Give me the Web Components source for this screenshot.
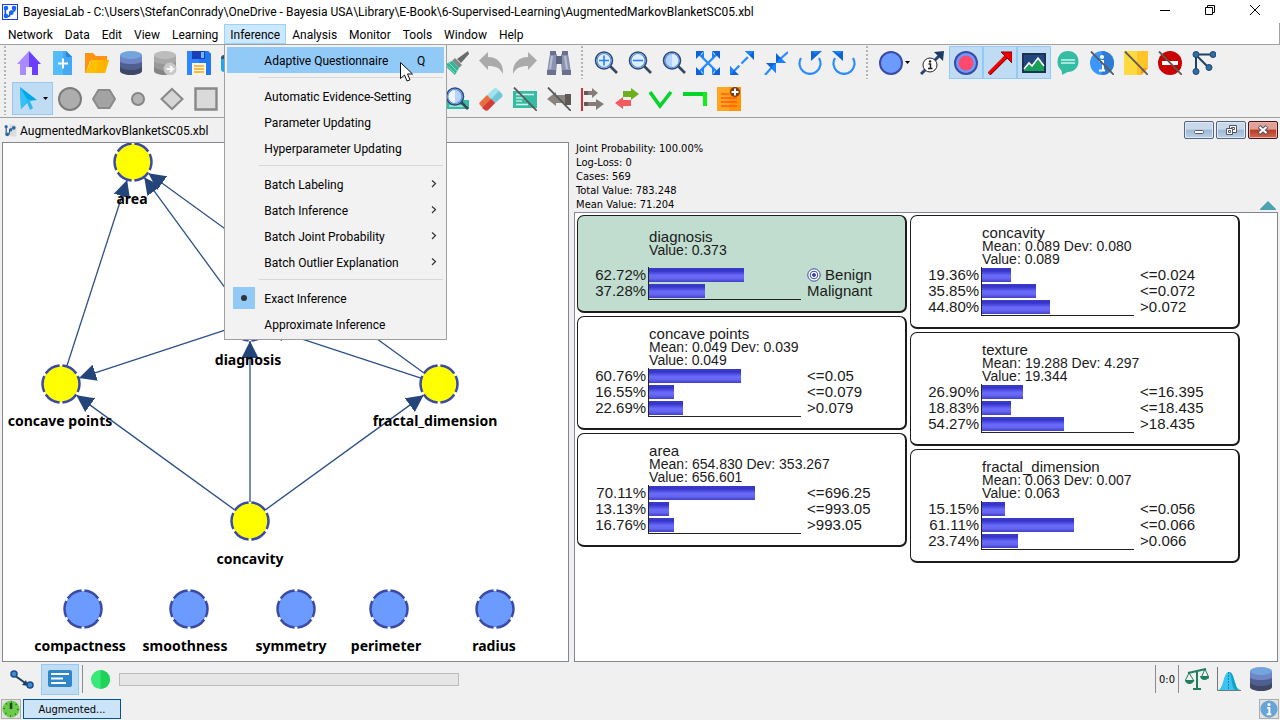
<!DOCTYPE html>
<html lang="en">
<head>
<meta charset="utf-8">
<meta name="viewport" content="width=device-width, initial-scale=1">
<title>BayesiaLab</title>
<style>
  :root {
    --ui-font: Roboto, "Open Sans", sans-serif;
    --small-font: "DejaVu Sans Condensed", "DejaVu Sans", sans-serif;
    --face: #f0f0f0;
    --line: #a0a0a0;
    --pane-line: #828790;
    --hot: #91c9f7;
    --pressed: #c0dcf3;
  }

  body {
    margin: 0;
    min-height: 100vh;
    display: flex;
    flex-direction: column;
    background: var(--face);
    color: #000;
    font-family: var(--ui-font);
    font-size: 12px;
  }

  .toolbars {
    display: flex;
    flex-direction: column;
    gap: 3px;
    padding: 1px 0 2px;
    border-bottom: 1px solid var(--line);
  }

  .toolbar-row {
    display: flex;
    gap: 1px;
  }

  main {
    flex: 1;
    display: flex;
    gap: 5px;
    padding: 0 2px;
  }

  bayes-graph {
    flex: 566 1 0;
  }

  .monitors {
    flex: 705 1 0;
    display: flex;
    flex-direction: column;
    min-width: 0;
  }

  .monitor-columns {
    flex: 1;
    display: flex;
    align-items: flex-start;
    gap: 3px;
    padding: 2px;
    background: #fff;
    border: 1px solid var(--pane-line);
  }

  .monitor-columns > div {
    display: flex;
    flex-direction: column;
    gap: 3px;
    width: 330px;
  }
</style>
</head>
<body>
  <title-bar>BayesiaLab - C:\Users\StefanConrady\OneDrive - Bayesia USA\Library\E-Book\6-Supervised-Learning\AugmentedMarkovBlanketSC05.xbl</title-bar>

  <menu-bar>
    <menu-title>Network</menu-title>
    <menu-title>Data</menu-title>
    <menu-title>Edit</menu-title>
    <menu-title>View</menu-title>
    <menu-title>Learning</menu-title>
    <menu-title open>Inference
      <menu-popup slot="popup">
        <menu-entry active shortcut="Q">Adaptive Questionnaire</menu-entry>
        <menu-separator></menu-separator>
        <menu-entry>Automatic Evidence-Setting</menu-entry>
        <menu-entry>Parameter Updating</menu-entry>
        <menu-entry>Hyperparameter Updating</menu-entry>
        <menu-separator></menu-separator>
        <menu-entry submenu>Batch Labeling</menu-entry>
        <menu-entry submenu>Batch Inference</menu-entry>
        <menu-entry submenu>Batch Joint Probability</menu-entry>
        <menu-entry submenu>Batch Outlier Explanation</menu-entry>
        <menu-separator></menu-separator>
        <menu-entry checked>Exact Inference</menu-entry>
        <menu-entry>Approximate Inference</menu-entry>
      </menu-popup>
    </menu-title>
    <menu-title>Analysis</menu-title>
    <menu-title>Monitor</menu-title>
    <menu-title>Tools</menu-title>
    <menu-title>Window</menu-title>
    <menu-title>Help</menu-title>
  </menu-bar>

  <div class="toolbars">
    <div class="toolbar-row">
      <tool-bar>
        <tool-button icon="home" label="Home"></tool-button>
        <tool-button icon="newDoc" label="New graph"></tool-button>
        <tool-button icon="folder" label="Open"></tool-button>
        <tool-button icon="database" label="Data source"></tool-button>
        <tool-button icon="databaseOff" label="Associate data"></tool-button>
        <tool-button icon="save" label="Save"></tool-button>
        <tool-button icon="print" label="Print"></tool-button>
        <tool-gap style="--w: 190px"></tool-gap>
        <tool-button icon="brush" label="Format painter"></tool-button>
        <tool-button icon="undo" label="Undo"></tool-button>
        <tool-button icon="redo" label="Redo"></tool-button>
        <tool-button icon="binoculars" label="Search"></tool-button>
      </tool-bar>
      <tool-bar>
        <tool-button icon="zoomIn" label="Zoom in"></tool-button>
        <tool-button icon="zoomOut" label="Zoom out"></tool-button>
        <tool-button icon="zoom" label="Default zoom"></tool-button>
        <tool-button icon="fit" label="Best fit"></tool-button>
        <tool-button icon="expand" label="Spread out"></tool-button>
        <tool-button icon="contract" label="Pull together"></tool-button>
        <tool-button icon="rotateLeft" label="Rotate left"></tool-button>
        <tool-button icon="rotateRight" label="Rotate right"></tool-button>
      </tool-bar>
      <tool-bar>
        <tool-button icon="blueNode" label="Node style" dropdown></tool-button>
        <tool-button icon="arcInfo" label="Arc information"></tool-button>
        <tool-button icon="target" label="Show target" pressed></tool-button>
        <tool-button icon="redArrow" label="Show arc force" pressed></tool-button>
        <tool-button icon="picture" label="Show images" pressed></tool-button>
        <tool-button icon="chat" label="Comments"></tool-button>
        <tool-button icon="infoOff" label="Hide information"></tool-button>
        <tool-button icon="noteOff" label="Hide notes"></tool-button>
        <tool-button icon="forbidOff" label="Hide forbidden arcs"></tool-button>
        <tool-button icon="network" label="Layout"></tool-button>
      </tool-bar>
    </div>
    <div class="toolbar-row">
      <tool-bar>
        <tool-button icon="pointer" label="Select" dropdown pressed></tool-button>
        <tool-button icon="circle" label="Node"></tool-button>
        <tool-button icon="hexagon" label="Constraint node"></tool-button>
        <tool-button icon="smallCircle" label="Function node"></tool-button>
        <tool-button icon="diamond" label="Utility node"></tool-button>
        <tool-button icon="square" label="Decision node"></tool-button>
        <tool-gap style="--w: 217px"></tool-gap>
        <tool-button icon="findCard" label="Find monitor"></tool-button>
        <tool-button icon="eraser" label="Clear evidence"></tool-button>
        <tool-button icon="cardOff" label="Hide monitors"></tool-button>
        <tool-button icon="backOff" label="Cancel"></tool-button>
        <tool-button icon="align" label="Align"></tool-button>
        <tool-button icon="swap" label="Swap"></tool-button>
        <tool-button icon="vee" label="V structure"></tool-button>
        <tool-button icon="corner" label="Corner"></tool-button>
        <tool-button icon="addNote" label="Add note"></tool-button>
      </tool-bar>
    </div>
  </div>

  <frame-title>AugmentedMarkovBlanketSC05.xbl</frame-title>

  <main>
    <bayes-graph></bayes-graph>
    <section class="monitors">
      <evidence-summary>
        <div>Joint Probability: 100.00%</div>
        <div>Log-Loss: 0</div>
        <div>Cases: 569</div>
        <div>Total Value: 783.248</div>
        <div>Mean Value: 71.204</div>
      </evidence-summary>
      <div class="monitor-columns">
        <div>
          <node-monitor name="diagnosis" value="0.373" target>
            <monitor-state p="62.72" target>Benign</monitor-state>
            <monitor-state p="37.28">Malignant</monitor-state>
          </node-monitor>
          <node-monitor name="concave points" mean="0.049" dev="0.039" value="0.049">
            <monitor-state p="60.76">&lt;=0.05</monitor-state>
            <monitor-state p="16.55">&lt;=0.079</monitor-state>
            <monitor-state p="22.69">&gt;0.079</monitor-state>
          </node-monitor>
          <node-monitor name="area" mean="654.830" dev="353.267" value="656.601">
            <monitor-state p="70.11">&lt;=696.25</monitor-state>
            <monitor-state p="13.13">&lt;=993.05</monitor-state>
            <monitor-state p="16.76">&gt;993.05</monitor-state>
          </node-monitor>
        </div>
        <div>
          <node-monitor name="concavity" mean="0.089" dev="0.080" value="0.089">
            <monitor-state p="19.36">&lt;=0.024</monitor-state>
            <monitor-state p="35.85">&lt;=0.072</monitor-state>
            <monitor-state p="44.80">&gt;0.072</monitor-state>
          </node-monitor>
          <node-monitor name="texture" mean="19.288" dev="4.297" value="19.344">
            <monitor-state p="26.90">&lt;=16.395</monitor-state>
            <monitor-state p="18.83">&lt;=18.435</monitor-state>
            <monitor-state p="54.27">&gt;18.435</monitor-state>
          </node-monitor>
          <node-monitor name="fractal_dimension" mean="0.063" dev="0.007" value="0.063">
            <monitor-state p="15.15">&lt;=0.056</monitor-state>
            <monitor-state p="61.11">&lt;=0.066</monitor-state>
            <monitor-state p="23.74">&gt;0.066</monitor-state>
          </node-monitor>
        </div>
      </div>
    </section>
  </main>

  <status-bar></status-bar>
  <task-bar>Augmented...</task-bar>

<script>
// 24x24 artwork, keyed by name
const slash = '<path d="M1 0.500L24 24" stroke="#5a5a5a" stroke-width="1.800"/>';
const lens = (fill, inner) => `
  <path d="M16 15l7 7" stroke="#34495e" stroke-width="2.600"/>
  <circle cx="10" cy="9.500" r="8.500" fill="${fill}" stroke="#2f4a73" stroke-width="1.600"/>
  <circle cx="10" cy="9.500" r="7" fill="none" stroke="#5a8fe0" stroke-width="1.200"/>${inner}`;
const dbArt = (top, a, b, c) => `
  <path d="M1 4v16c0 2 4.500 4 11 4s11-2 11-4V4z" fill="${c}"/>
  <path d="M1 4v11c0 2 4.500 4 11 4s11-2 11-4V4z" fill="${b}"/>
  <path d="M1 4v6c0 2 4.500 3 11 3s11-1 11-3V4z" fill="${a}"/>
  <ellipse cx="12" cy="4" rx="11" ry="4" fill="${top}"/>`;
const disc = '<circle cx="12" cy="12" r="11" fill="#6b9bff" stroke="#3b4ba5" stroke-width="2"/>';
const card = '<path d="M0 4h24v17H0z" fill="#35bda4"/><path d="M3 7.500h18M3 17.500h12" stroke="#d9f5ee" stroke-width="1.500"/><path d="M3 11h8M3 14h6" stroke="#fff" stroke-width="1.200"/>';

const ICONS = {
  app: '<rect x=".5" y=".5" width="23" height="23" fill="#fff" stroke="#1a3df0" stroke-width="2"/><path d="M5 5v14l6-1 2-6 6-2V5" fill="none" stroke="#1f55a0" stroke-width="2.500"/><g fill="#1565ff"><circle cx="6" cy="6" r="3.500"/><circle cx="6" cy="18" r="3.500"/><circle cx="18" cy="6" r="3.500"/><circle cx="14" cy="13" r="3.500"/></g>',
  doc: '<path d="M10 1h10l3 4v18H10z" fill="#dcdcdc"/><path d="M4 5v14l5 0 2-8 6-3" fill="none" stroke="#1f4a80" stroke-width="2"/><g fill="#2d6ba8"><circle cx="4" cy="5" r="3"/><circle cx="6" cy="19" r="3.500"/><circle cx="12" cy="11" r="3"/><circle cx="18" cy="7" r="3.500"/></g>',
  home: '<path d="M12 0L0 13h3v11h6v-8h3z" fill="#a98bff"/><path d="M12 0l12 13h-3v11h-6v-8h-3z" fill="#6a3dff"/>',
  newDoc: '<path d="M2 0h13l6 6v18H2z" fill="#53bcff"/><path d="M12 0h3l6 6v18h-9z" fill="#45a8f5"/><path d="M15 0v6h6z" fill="#2a85d8"/><path d="M7 12.500h10M12 7.500v10" stroke="#fff" stroke-width="2"/>',
  folder: '<path d="M0 2h8l3 3h11v5H5L1 22H0z" fill="#ff9412"/><path d="M6 9h18l-4 13H1z" fill="#ffc000"/><path d="M14 9h10l-4 13h-9z" fill="#ffb400"/>',
  database: dbArt('#73a5dc', '#7086c4', '#4f5f8e', '#3e4763'),
  databaseOff: dbArt('#bdbdbd', '#a9a9a9', '#989898', '#858585') + '<circle cx="17" cy="18" r="6.500" fill="#c9c9c9"/><path d="M13.500 18h6m-2.500-3l3 3-3 3" fill="none" stroke="#f8f8f8" stroke-width="2"/>',
  save: '<path d="M0 0h21l3 3v21H0z" fill="#2f86ff"/><path d="M12 0h9l3 3v21H12z" fill="#2278f0"/><path d="M5 0h13v8H5z" fill="#1c3fb8"/><path d="M14 1h3v6h-3z" fill="#6fb4ff"/><path d="M5 12h14v12H5z" fill="#fff4dc"/><path d="M7 15h10M7 18h10M7 21h10" stroke="#f5a623" stroke-width="1.400"/>',
  print: '<rect x="0" y="4" width="24" height="17" rx="3" fill="#1fa8f0"/><path d="M0 8a4 4 0 0 1 4-4h16v4z" fill="#3e4f63"/>',
  brush: '<path d="M23 0l1 3-8 9-4-4z" fill="#6a6a6a"/><path d="M10 7l7 7-3 3-7-7z" fill="#7d8a8a"/><path d="M7 10l7 7-4 7L-1 14z" fill="#35b497"/><path d="M1 14l9 8M4 12l8 8" stroke="#7fe0c8"/>',
  undo: '<path d="M0 9.500L9 1v5c9 0 15 6 15 15v2c-3-6-7-8-15-8v4z" fill="#aaa"/>',
  redo: '<path d="M24 9.500L15 1v5C6 6 0 12 0 21v2c3-6 7-8 15-8v4z" fill="#aaa"/>',
  binoculars: '<path d="M3 3h7v10l-1 9H0L2 8zM14 3h7l1 5 2 14h-9l-1-9z" fill="#8b93b0"/><path d="M9 5h6v8H9z" fill="#5d6480"/><path d="M3 0h6v4H3zM15 0h6v4h-6z" fill="#6a718f"/><path d="M0 19h9v5H0zM15 19h9v5h-9z" fill="#6a718f"/><path d="M5 5l-2 13M18 5l2 13" stroke="#b9c0d6" stroke-width="2"/>',
  zoomIn: lens('#e0efff', '<path d="M5 9.500h10M10 4.500v10" stroke="#2a7fff" stroke-width="1.600"/>'),
  zoomOut: lens('#e0efff', '<path d="M5 9.500h10" stroke="#2a7fff" stroke-width="1.600"/>'),
  zoom: lens('#b5d3ff', '<path d="M10 3a6.500 6.500 0 0 1 0 13z" fill="#dcebff"/>'),
  fit: '<path d="M3 3l18 18M21 3L3 21" stroke="#2a8cff" stroke-width="2.400"/><path d="M0 0h8L0 8zM24 0v8l-8-8zM0 24v-8l8 8zM24 24h-8l8-8z" fill="#1063d6"/><path d="M8 0L5 5l3 3zM16 0l3 5-3 3zM8 24l-3-5 3-3zM16 24l3-5-3-3z" fill="#1683ff"/>',
  expand: '<path d="M3 21L21 3" stroke="#2a8cff" stroke-width="2.200" stroke-dasharray="9 3"/><path d="M24 0v9l-9-9zM0 24v-9l9 9z" fill="#1063d6"/><path d="M24 0h-9l5 4zM0 24v-9l4 5z" fill="#1683ff"/>',
  contract: '<path d="M24 1L15 9M9 15L1 24" stroke="#2a8cff" stroke-width="2.200"/><path d="M12 2v10h10zM2 12h10v10z" fill="#1063d6"/><path d="M12 12h10l-6-5zM12 12v10l-5-6z" fill="#1683ff"/>',
  rotateLeft: '<path d="M3 7a10.500 10.500 0 1 0 18 0" fill="none" stroke="#2a8cff" stroke-width="2.200"/><path d="M13 0h11L13 10z" fill="#1063d6"/><path d="M13 0h11l-7 3z" fill="#1683ff"/>',
  rotateRight: '<path d="M21 7a10.500 10.500 0 1 1-18 0" fill="none" stroke="#2a8cff" stroke-width="2.200"/><path d="M0 0h11v10z" fill="#1063d6"/><path d="M0 0h11L7 3z" fill="#1683ff"/>',
  blueNode: disc,
  arcInfo: '<path d="M1 23L21 3" stroke="#24457a" stroke-width="3"/><path d="M14 1L24 0l-1 10z" fill="#1d3a63"/><circle cx="10" cy="14" r="7" fill="#fff" stroke="#222"/><circle cx="10" cy="10.500" r="1.200" fill="#222"/><path d="M8.500 13h2v4.500M8 17.500h4.500" fill="none" stroke="#222" stroke-width="1.500"/>',
  target: disc + '<circle cx="12" cy="12" r="7.500" fill="#ff4a6e"/>',
  redArrow: '<path d="M1 23L18 6" stroke="#8e0000" stroke-width="4"/><path d="M1 22.500L18 5.500" stroke="#f00" stroke-width="2.500"/><path d="M13 1h11v11z" fill="#f00000" stroke="#800"/>',
  picture: '<path d="M0 2h24v20H0z" fill="#1b3350"/><path d="M2 4h20v16H2z" fill="#24487e"/><path d="M2 19l5-6 3 3 6-8 6 8v4H2z" fill="#16a05a"/><path d="M2 18l5-6 3 3 6-8 6 8" fill="none" stroke="#fff" stroke-width="1.600"/>',
  chat: '<path d="M12 0C18.500 0 22.500 4.500 22.500 10.500S18 21 12 21c-1 0-2 1-6 3 0-2 0-3-1-5-2-2-3.500-4-3.500-8C1.500 4.500 5.500 0 12 0z" fill="#35bda4"/><path d="M5 9h14M5 12h14" stroke="#c9f3ea" stroke-width="1.500"/>',
  infoOff: '<circle cx="12" cy="12" r="12" fill="#3a97ff"/><path d="M12 0a12 12 0 0 1 0 24z" fill="#2f7bd4"/><circle cx="12" cy="6" r="2" fill="#fff"/><path d="M9 10h4v9M9 19.500h6" fill="none" stroke="#fff" stroke-width="2"/>' + slash,
  noteOff: '<path d="M0 0h24v17l-7 7H0z" fill="#ffda3e"/><path d="M13 0h11v17l-7 7h-4z" fill="#ffc428"/><path d="M24 17h-7v7z" fill="#f39c12"/>' + slash,
  forbidOff: '<circle cx="12" cy="12" r="12" fill="#c80000"/><path d="M4 10h16v4H4z" fill="#fff"/>' + slash,
  network: '<path d="M21 3.500H4v17M4 4l13 13" fill="none" stroke="#1f4260" stroke-width="2"/><g fill="#2e6f9e" stroke="#1b4480"><circle cx="4" cy="3.500" r="3"/><circle cx="21" cy="3.500" r="3"/><circle cx="17" cy="16.500" r="3"/><circle cx="4" cy="20.500" r="3"/></g>',
  pointer: '<path d="M3 0l17 13-8 1-8 8z" fill="#00a8e8"/><path d="M3 0l8 14-7 8z" fill="#35c1f5"/><path d="M9 13l3-1 4 9-3 2z" fill="#2db8ef"/>',
  circle: '<circle cx="12" cy="12" r="11" fill="#adadad" stroke="#7c7c7c" stroke-width="2"/>',
  hexagon: '<path d="M6.500 3h11L23 12l-5.500 9h-11L1 12z" fill="#a3a3a3" stroke="#8a8a8a" stroke-width="2"/>',
  smallCircle: '<circle cx="12" cy="12" r="6" fill="#b4b4b4" stroke="#858585" stroke-width="2"/>',
  diamond: '<path d="M12 2l10.500 10L12 22 1.500 12z" fill="#d6d6d6" stroke="#888" stroke-width="2"/>',
  square: '<path d="M1.500 1.500h21v21h-21z" fill="#dadada" stroke="#888" stroke-width="2.400"/>',
  findCard: '<path d="M2 13h22v9H2z" fill="#35bda4"/><path d="M4 19h18" stroke="#fff"/>' + lens('#b5d3ff', '<path d="M10 3a6.500 6.500 0 0 0 0 13z" fill="#eef5ff"/>'),
  eraser: '<path d="M15 1.500q1.500-1 3 0l5 5.500q1 1.500 0 3l-7 6-8-8z" fill="#9fe3ec"/><path d="M20 4l3 3q1 1.500 0 3l-7 6-4-4z" fill="#72c6d8"/><path d="M8 8l8 8-7 7q-2 1-3 0l-5-5q-1.500-1.500 0-3z" fill="#e8703c"/><path d="M12 12l4 4-7 7q-2 1-3 0l-3-2z" fill="#d33a3a"/>',
  cardOff: card + slash,
  backOff: '<path d="M0 12l9-7v3h9v8H9v3z" fill="#8a8380"/><path d="M18 7h6v11h-6z" fill="#5f5a57"/>' + slash,
  align: '<path d="M1 1v23" stroke="#d12f35" stroke-width="2"/><path d="M3 4h8V1l6 5-6 5V8H3zM3 15h12v-3l8 5-8 6v-4H3z" fill="#857c78"/><path d="M3 4h4v4H3zM3 15h4v4H3z" fill="#625b58"/>',
  swap: '<path d="M8 4h8V1l8 6-8 6v-3H8z" fill="#6cb01f"/><path d="M16 13H8v-3l-8 6 8 6v-3h8z" fill="#f4595c"/>',
  vee: '<path d="M1 5l10 14L22 5" fill="none" stroke="#06d42c" stroke-width="3.600"/>',
  corner: '<path d="M0 7h22v12" fill="none" stroke="#06d42c" stroke-width="4"/><path d="M22 5v14" stroke="#10f018" stroke-width="4"/>',
  addNote: '<path d="M0 0h24v24H0z" fill="#ffa51e"/><path d="M12 0h12v24H12z" fill="#ff9500"/><path d="M4 7h8M4 11h16M4 15h16M4 19h16" stroke="#ff5a1e" stroke-width="1.600"/><circle cx="18" cy="5" r="5" fill="#7c3b12"/><path d="M14.500 5h7M18 1.500v7" stroke="#fff" stroke-width="2"/>',
  arc: '<path d="M4 8l14 10" stroke="#1f3f55" stroke-width="2"/><path d="M18 19l-6-1 4-5z" fill="#1f3f55"/><g fill="#3f8fc0" stroke="#1b4a9a" stroke-width="1.500"><circle cx="4" cy="7" r="3"/><circle cx="20" cy="18" r="3"/></g>',
  monitor: '<path d="M0 5q0-2 2-2h20q2 0 2 2v13q0 2-2 2H2q-2 0-2-2z" fill="#2f86c8"/><path d="M3 7h18M3 11.500h12M3 16h15" stroke="#fff" stroke-width="2.200"/>',
  scales: '<path d="M12 4v18M8 22h8M3 6l18-4" fill="none" stroke="#1e7f5c" stroke-width="2"/><path d="M4 6L0 14h9zM20 2l-4 9h8z" fill="none" stroke="#1e7f5c"/><path d="M0 13h9q-1 4-4.500 4T0 13zM15 9h9q-1 4-4.500 4T15 9z" fill="#1e7f5c"/>',
  curve: '<path d="M.5 0v23.500H24" fill="none" stroke="#777"/><path d="M1 23c6-1 5-18 11-18s5 17 11 18z" fill="#3cc4f0"/><path d="M12 5c6 0 5 17 11 18h-5C14 20 15 7 12 5z" fill="#10a4c8"/><path d="M11.500 5v18" stroke="#1685a8" stroke-dasharray="2 1"/>',
  power: '<circle cx="12" cy="12" r="11.500" fill="#6ccb4b"/><circle cx="12" cy="12" r="9" fill="none" stroke="#2b6b25" stroke-width="2" stroke-dasharray="1.500 5.500"/><path d="M12 4v8" stroke="#1e4a1c" stroke-width="3.500"/>',
  info: '<circle cx="12" cy="12" r="11.500" fill="#68a4d6"/><circle cx="12" cy="6" r="2" fill="#fff"/><path d="M9.500 10.500h3v8M9 19h6" fill="none" stroke="#fff" stroke-width="2.500"/>'
};

const icon = (name, size = 24) =>
  `<svg width="${size}" height="${size}" viewBox="0 0 24 24" fill="none" aria-hidden="true">${ICONS[name]}</svg>`;

const BUTTON_RESET = `
  button {
    margin: 0;
    padding: 0;
    border: 1px solid transparent;
    background: none;
    font: inherit;
    color: inherit;
  }
  svg { display: block; flex: none; }
`;

class TitleBar extends HTMLElement {
  connectedCallback() {
    this.attachShadow({ mode: 'open' });
    this.shadowRoot.innerHTML = `
      <style>
        :host {
          display: flex;
          align-items: center;
          height: 23px;
          padding: 0 3px 0 2px;
          background: #fff;
        }
        .text {
          flex: 1;
          padding-left: 5px;
          white-space: nowrap;
          overflow: hidden;
        }
        ${BUTTON_RESET}
        button {
          align-self: flex-start;
          width: 45px;
          height: 20px;
          display: flex;
          align-items: center;
          justify-content: center;
        }
      </style>
      ${icon('app', 16)}
      <span class="text"><slot></slot></span>
      <button aria-label="Minimize"><svg width="10" height="10"><path d="M0 5.500h10" stroke="#000"/></svg></button>
      <button aria-label="Restore"><svg width="10" height="10" fill="none" stroke="#000"><path d="M.5 2.500h7v7h-7zM2.500 2V.5h7v7H8"/></svg></button>
      <button aria-label="Close"><svg width="10" height="10" stroke="#000"><path d="M0 0l10 10M10 0L0 10"/></svg></button>
    `;
  }
}

class MenuBar extends HTMLElement {
  connectedCallback() {
    this.attachShadow({ mode: 'open' });
    this.shadowRoot.innerHTML = `
      <style>
        :host {
          display: flex;
          height: 20px;
          padding: 1px 0 0 2px;
          background: #fff;
          border-right: 1px solid var(--line);
          border-bottom: 1px solid var(--line);
        }
      </style>
      <slot></slot>
    `;
  }
}

class MenuTitle extends HTMLElement {
  connectedCallback() {
    this.attachShadow({ mode: 'open' });
    this.shadowRoot.innerHTML = `
      <style>
        :host {
          display: block;
          position: relative;
        }
        ${BUTTON_RESET}
        button {
          height: 20px;
          padding: 2px 5px 0;
          line-height: 16px;
          white-space: nowrap;
        }
        :host([open]) button {
          background: #cce8ff;
          border-color: #99d1ff;
        }
      </style>
      <button><slot></slot></button>
      <slot name="popup"></slot>
    `;
  }
}

class MenuPopup extends HTMLElement {
  connectedCallback() {
    this.attachShadow({ mode: 'open' });
    this.shadowRoot.innerHTML = `
      <style>
        :host {
          display: block;
          position: absolute;
          z-index: 10;
          top: 20px;
          left: 0;
          width: 217px;
          padding: 2px;
          background: #f2f2f2;
          border: 1px solid var(--line);
        }
        .cursor {
          position: absolute;
          left: 175px;
          top: 17px;
        }
      </style>
      <slot></slot>
      <svg class="cursor" width="13" height="20" viewBox="0 0 13 20"><path d="M.5.500v16l4-3.500 2.500 6 3-1.200-2.500-5.800h5z" fill="#fff" stroke="#111"/></svg>
    `;
  }
}

class MenuEntry extends HTMLElement {
  connectedCallback() {
    this.attachShadow({ mode: 'open' });
    this.shadowRoot.innerHTML = `
      <style>
        :host { display: block; }
        ${BUTTON_RESET}
        button {
          display: flex;
          align-items: center;
          width: 100%;
          height: 26px;
          border: 0;
          padding: 0 7px 0 6px;
          text-align: left;
          white-space: nowrap;
        }
        :host([active]) button { background: var(--hot); }
        .mark {
          display: flex;
          align-items: center;
          justify-content: center;
          width: 22px;
          height: 22px;
          margin-right: 9px;
        }
        :host([checked]) .mark { background: var(--hot); }
        :host([checked]) .mark::after {
          content: '';
          width: 6px;
          height: 6px;
          border-radius: 50%;
          background: #333;
        }
        .text, .key { padding-top: 2px; }
        .text { flex: 1; }
        .key { padding-right: 12px; }
      </style>
      <button>
        <span class="mark"></span>
        <span class="text"><slot></slot></span>
        ${this.hasAttribute('shortcut') ? `<span class="key">${this.getAttribute('shortcut')}</span>` : ''}
        ${this.hasAttribute('submenu') ? '<svg width="6" height="10" viewBox="0 0 6 10"><path d="M1 1.500l3.500 3L1 8" fill="none" stroke="#333" stroke-width="1.200"/></svg>' : ''}
      </button>
    `;
  }
}

class MenuSeparator extends HTMLElement {
  connectedCallback() {
    this.attachShadow({ mode: 'open' });
    this.shadowRoot.innerHTML = `
      <style>
        :host {
          display: block;
          height: 5px;
          margin: 4px 1px 0 32px;
          border-top: 1px solid #d7d7d7;
        }
      </style>
    `;
  }
}

class ToolBar extends HTMLElement {
  connectedCallback() {
    this.attachShadow({ mode: 'open' });
    this.shadowRoot.innerHTML = `
      <style>
        :host { display: flex; }
        .grip {
          box-sizing: border-box;
          width: 12px;
          padding: 0 6px 0 4px;
        }
        .grip::before {
          content: '';
          display: block;
          height: 100%;
          background: repeating-linear-gradient(#b4b4b4 0 2px, transparent 2px 4px);
        }
      </style>
      <div class="grip"></div>
      <slot></slot>
    `;
  }
}

class ToolGap extends HTMLElement {
  connectedCallback() {
    this.attachShadow({ mode: 'open' });
    this.shadowRoot.innerHTML = '<style>:host { display: block; width: var(--w); }</style>';
  }
}

class ToolButton extends HTMLElement {
  connectedCallback() {
    this.attachShadow({ mode: 'open' });
    this.shadowRoot.innerHTML = `
      <style>
        :host { display: block; flex: none; }
        ${BUTTON_RESET}
        button {
          display: flex;
          align-items: center;
          gap: 2px;
          box-sizing: border-box;
          width: 34px;
          height: 33px;
          padding: 0 4px;
        }
        :host([dropdown]) button { width: 41px; }
        :host([pressed]) button {
          background: var(--pressed);
          border-color: var(--hot);
        }
      </style>
      <button aria-label="${this.getAttribute('label')}">
        ${icon(this.getAttribute('icon'))}
        ${this.hasAttribute('dropdown') ? '<svg width="5" height="3"><path d="M0 0h5L2.500 3z" fill="#000"/></svg>' : ''}
      </button>
    `;
  }
}

class FrameTitle extends HTMLElement {
  connectedCallback() {
    this.attachShadow({ mode: 'open' });
    this.shadowRoot.innerHTML = `
      <style>
        :host {
          display: flex;
          align-items: center;
          gap: 2px;
          height: 24px;
          padding: 0 2px 0 4px;
        }
        .text {
          flex: 1;
          padding: 2px 0 0 1px;
        }
        ${BUTTON_RESET}
        button {
          display: flex;
          align-items: center;
          justify-content: center;
          box-sizing: border-box;
          width: 30px;
          height: 18px;
          border: 1px solid #56657e;
          border-radius: 2px;
          background: linear-gradient(#c9d9ea 45%, #9fb9d4 50%, #b9d0e6);
          box-shadow: inset 0 0 0 1px #dfeaf5;
        }
        .close {
          border-color: #43141a;
          background: linear-gradient(#e0a096 45%, #b83a26 50%, #cf6a50);
          box-shadow: inset 0 0 0 1px #e5b5ac;
        }
      </style>
      ${icon('doc', 13)}
      <span class="text"><slot></slot></span>
      <button aria-label="Minimize"><svg width="12" height="12" fill="#fff" stroke="#535666"><rect x="1.500" y="6.500" width="9" height="3" rx="1"/></svg></button>
      <button aria-label="Restore"><svg width="12" height="12" fill="#fff" stroke="#535666"><path d="M4.500 1.500h7v7h-7zM6.500 3.500h3v2h-3z"/><path d="M1.500 4.500h6v6h-6zM3.500 6.500h2v2h-2z"/></svg></button>
      <button class="close" aria-label="Close"><svg width="12" height="12"><path d="M2 2.500l8 7M10 2.500l-8 7" stroke="#535666" stroke-width="4"/><path d="M2.500 3l7 6M9.500 3l-7 6" stroke="#fff" stroke-width="2"/></svg></button>
    `;
  }
}

const NODES = {
  area: { x: 130, y: 19, label: [129, 61] },
  diagnosis: { x: 247, y: 179, label: [245, 222] },
  'concave points': { x: 58, y: 241, label: [57, 283] },
  fractal_dimension: { x: 436, y: 241, label: [432, 283] },
  concavity: { x: 247, y: 378, label: [247, 421] },
  compactness: { x: 80, y: 466, label: [77, 508], loose: true },
  smoothness: { x: 186, y: 466, label: [182, 508], loose: true },
  symmetry: { x: 293, y: 466, label: [288, 508], loose: true },
  perimeter: { x: 386, y: 466, label: [383, 508], loose: true },
  radius: { x: 492, y: 466, label: [491, 508], loose: true }
};

const ARCS = [
  ['concave points', 'area'],
  ['diagnosis', 'area'],
  ['fractal_dimension', 'area'],
  ['diagnosis', 'concave points'],
  ['fractal_dimension', 'diagnosis'],
  ['concavity', 'concave points'],
  ['concavity', 'diagnosis'],
  ['concavity', 'fractal_dimension']
];

class BayesGraph extends HTMLElement {
  connectedCallback() {
    this.attachShadow({ mode: 'open' });
    const radius = 19;

    const arcs = ARCS.map(([from, to]) => {
      const a = NODES[from];
      const b = NODES[to];
      const length = Math.hypot(b.x - a.x, b.y - a.y);
      const dx = (b.x - a.x) / length * radius;
      const dy = (b.y - a.y) / length * radius;
      return `<line x1="${a.x + dx}" y1="${a.y + dy}" x2="${b.x - dx}" y2="${b.y - dy}" marker-end="url(#head)"/>`;
    });

    const nodes = Object.values(NODES).map(n => `
      <circle cx="${n.x}" cy="${n.y}" r="18" fill="${n.loose ? '#6b9bff' : '#ff0'}"/>
      <circle class="ring" cx="${n.x}" cy="${n.y}" r="18.500" pathLength="360"/>`);

    const labels = Object.entries(NODES).map(([name, n]) =>
      `<text x="${n.label[0]}" y="${n.label[1]}">${name}</text>`);

    this.shadowRoot.innerHTML = `
      <style>
        :host {
          display: block;
          box-sizing: border-box;
          min-width: 0;
          background: #fff;
          border: 1px solid var(--pane-line);
          overflow: hidden;
        }
        svg {
          display: block;
          width: 100%;
          height: 100%;
        }
        line { stroke: #2c5088; stroke-width: 1.300px; }
        .ring {
          fill: none;
          stroke: #3b4ba5;
          stroke-width: 2.500px;
          stroke-dasharray: 51 9;
          stroke-dashoffset: 25.500;
        }
        text {
          font: bold 14px "Noto Sans", "Open Sans", sans-serif;
          text-anchor: middle;
        }
      </style>
      <svg>
        <defs>
          <marker id="head" viewBox="0 0 17 17" refX="17" refY="8.500" markerWidth="17" markerHeight="17" markerUnits="userSpaceOnUse" orient="auto">
            <path d="M0 0l17 8.500L0 17z" fill="#24457a"/>
          </marker>
        </defs>
        ${arcs.join('')}
        ${nodes.join('')}
        ${labels.join('')}
      </svg>
    `;
  }
}

class EvidenceSummary extends HTMLElement {
  connectedCallback() {
    this.attachShadow({ mode: 'open' });
    this.shadowRoot.innerHTML = `
      <style>
        :host {
          display: flex;
          align-items: flex-end;
          justify-content: space-between;
          height: 70px;
          padding: 0 2px;
          font-family: var(--small-font);
          font-size: 11px;
          line-height: 14px;
        }
        ${BUTTON_RESET}
        button {
          padding-bottom: 2px;
          border: 0;
        }
      </style>
      <div><slot></slot></div>
      <button aria-label="Collapse"><svg width="16" height="9"><path d="M0 9V8l8-8 8 8v1z" fill="#4ba3b3"/></svg></button>
    `;
  }
}

class NodeMonitor extends HTMLElement {
  connectedCallback() {
    this.attachShadow({ mode: 'open' });
    const mean = this.getAttribute('mean');
    this.shadowRoot.innerHTML = `
      <style>
        :host {
          display: block;
          box-sizing: border-box;
          padding: 10px 0 11px;
          background: #fff;
          border: 1px solid #1c1c1c;
          border-right-width: 2px;
          border-bottom-width: 2px;
          border-radius: 7px;
          color: #1a1a1a;
          font: 15px/13px "Liberation Sans", Arial, sans-serif;
          white-space: nowrap;
        }
        :host([target]) { background: #c1ddcf; }
        header {
          box-sizing: border-box;
          height: 41px;
          padding-left: 71px;
        }
        :host([target]) header { padding-top: 4px; }
        .name { line-height: 14px; }
        .stat { font-size: 14px; }
        .states {
          display: flex;
          flex-direction: column;
        }
        .axis {
          width: 153px;
          height: 1px;
          margin-left: 70px;
          background: #222;
        }
      </style>
      <header>
        <div class="name">${this.getAttribute('name')}</div>
        ${mean ? `<div class="stat">Mean: ${mean} Dev: ${this.getAttribute('dev')}</div>` : ''}
        <div class="stat">Value: ${this.getAttribute('value')}</div>
      </header>
      <div class="states"><slot></slot></div>
      <div class="axis"></div>
    `;
  }
}

class MonitorState extends HTMLElement {
  connectedCallback() {
    this.attachShadow({ mode: 'open' });
    const p = this.getAttribute('p');
    this.shadowRoot.innerHTML = `
      <style>
        :host {
          display: grid;
          grid-template-columns: 70px 152px 1fr;
          height: 16px;
          line-height: 16px;
        }
        .percent {
          padding-right: 2px;
          text-align: right;
        }
        .track {
          display: flex;
          align-items: center;
          border-left: 1px solid #222;
        }
        .bar {
          width: ${p}%;
          height: 14px;
          background: linear-gradient(#3c3cc0, #3434cc 20%, #6c6cfb 55%, #6464f0 75%, #4040c8);
        }
        .label {
          display: flex;
          align-items: center;
          gap: 4px;
          padding-left: 7px;
        }
      </style>
      <span class="percent">${p}%</span>
      <span class="track"><span class="bar"></span></span>
      <span class="label">${this.hasAttribute('target') ? `
        <svg width="14" height="14" fill="#fff" stroke="#3b4ba5"><circle cx="7" cy="7" r="6.200"/><circle cx="7" cy="7" r="3.800"/><circle cx="7" cy="7" r="1.500" fill="#3b4ba5"/></svg>` : ''}
        <slot></slot></span>
    `;
  }
}

class StatusBar extends HTMLElement {
  connectedCallback() {
    this.attachShadow({ mode: 'open' });
    this.shadowRoot.innerHTML = `
      <style>
        :host {
          display: flex;
          align-items: center;
          height: 34px;
          padding: 0 3px 1px;
          font-family: var(--small-font);
          font-size: 11px;
        }
        ${BUTTON_RESET}
        button {
          display: flex;
          align-items: center;
          justify-content: center;
          box-sizing: border-box;
          width: 38px;
          height: 31px;
        }
        .pressed {
          background: var(--pressed);
          border-color: var(--hot);
        }
        .rule {
          width: 1px;
          height: 28px;
          margin: 0 3px;
          background: #8c8c8c;
        }
        .light { margin: 0 9px 0 5px; }
        progress {
          appearance: none;
          box-sizing: border-box;
          width: 340px;
          height: 13px;
          border: 1px solid #bcbcbc;
          background: #e6e6e6;
        }
        progress::-webkit-progress-bar { background: #e6e6e6; }
        .space { flex: 1; }
        .art {
          display: flex;
          gap: 8px;
          padding: 0 4px 0 3px;
        }
      </style>
      <button aria-label="Arcs">${icon('arc')}</button>
      <button class="pressed" aria-label="Monitors">${icon('monitor')}</button>
      <span class="rule"></span>
      <svg class="light" width="19" height="19"><circle cx="9.500" cy="9.500" r="9.500" fill="#38e878"/><path d="M9.500 0a9.500 9.500 0 0 1 0 19z" fill="#1fd35a"/></svg>
      <progress value="0" max="100" aria-label="Progress"></progress>
      <span class="space"></span>
      <span class="rule"></span>
      <span>0:0</span>
      <span class="rule"></span>
      <span class="art">${icon('scales')}${icon('curve')}${icon('database')}</span>
    `;
  }
}

class TaskBar extends HTMLElement {
  connectedCallback() {
    this.attachShadow({ mode: 'open' });
    this.shadowRoot.innerHTML = `
      <style>
        :host {
          display: flex;
          align-items: center;
          justify-content: space-between;
          height: 22px;
          padding: 1px 1px 0;
          font-family: var(--small-font);
          font-size: 11px;
        }
        ${BUTTON_RESET}
        div {
          display: flex;
          gap: 2px;
        }
        button {
          box-sizing: border-box;
          width: 20px;
          height: 20px;
          border-color: #adadad;
          background: #e1e1e1;
        }
        .window {
          width: 98px;
          border-color: #005499;
          background: #cce4f7;
        }
      </style>
      <div>
        <button aria-label="Power">${icon('power', 18)}</button>
        <button class="window"><slot></slot></button>
      </div>
      <button aria-label="Information">${icon('info', 18)}</button>
    `;
  }
}

customElements.define('title-bar', TitleBar);
customElements.define('menu-bar', MenuBar);
customElements.define('menu-title', MenuTitle);
customElements.define('menu-popup', MenuPopup);
customElements.define('menu-entry', MenuEntry);
customElements.define('menu-separator', MenuSeparator);
customElements.define('tool-bar', ToolBar);
customElements.define('tool-gap', ToolGap);
customElements.define('tool-button', ToolButton);
customElements.define('frame-title', FrameTitle);
customElements.define('bayes-graph', BayesGraph);
customElements.define('evidence-summary', EvidenceSummary);
customElements.define('node-monitor', NodeMonitor);
customElements.define('monitor-state', MonitorState);
customElements.define('status-bar', StatusBar);
customElements.define('task-bar', TaskBar);
</script>
</body>
</html>
